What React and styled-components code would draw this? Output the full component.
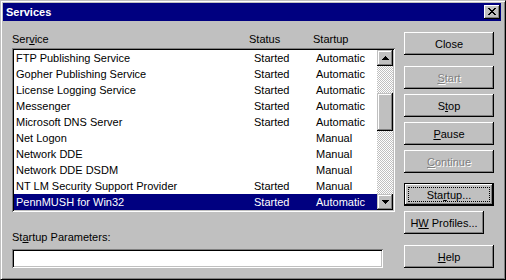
import styled, { createGlobalStyle } from "styled-components";

const GlobalStyle = createGlobalStyle`
  html, body {
    margin: 0;
    padding: 0;
    background: #c0c0c0;
  }
  body {
    font-family: "Liberation Sans", Arial, sans-serif;
    font-size: 11px;
    color: #000;
  }
  * {
    box-sizing: border-box;
  }
`;

const raised = "inset -1px -1px #000, inset 1px 1px #fff, inset -2px -2px #808080";
const raisedDefault =
  "inset 0 0 0 1px #000, inset -2px -2px #000, inset 2px 2px #fff, inset -3px -3px #808080";
const scrollRaised =
  "inset -1px -1px #000, inset 1px 1px #c0c0c0, inset -2px -2px #808080, inset 2px 2px #fff";
const sunken =
  "inset 1px 1px #808080, inset -1px -1px #fff, inset 2px 2px #000, inset -2px -2px #c0c0c0";

const Window = styled.div`
  width: 506px;
  height: 280px;
  background: #c0c0c0;
  border: 1px solid;
  border-color: #c0c0c0 #000 #000 #c0c0c0;
  box-shadow: inset 1px 1px #fff, inset -1px -1px #808080;
  padding: 2px 4px 2px 2px;
  display: flex;
  flex-direction: column;
`;

const TitleBar = styled.div`
  height: 18px;
  flex: none;
  background: #000080;
  color: #fff;
  font-weight: bold;
  display: flex;
  align-items: center;
  justify-content: space-between;
  padding: 0 1px 0 3px;
`;

const CaptionButton = styled.div`
  width: 16px;
  height: 14px;
  background: #c0c0c0;
  box-shadow: ${raised};
  display: flex;
  padding: 3px 0 0 4px;
`;

const Content = styled.div`
  display: flex;
  gap: 9px;
  padding: 10px 0 0 9px;
`;

const LeftColumn = styled.div`
  width: 383px;
  display: flex;
  flex-direction: column;
`;

const Header = styled.div`
  display: grid;
  grid-template-columns: 237px 64px 1fr;
  height: 17px;
  line-height: 17px;
`;

const ListBox = styled.div`
  height: 164px;
  background: #fff;
  box-shadow: ${sunken};
  padding: 2px;
  display: flex;
`;

const Rows = styled.div`
  flex: 1;
  display: flex;
  flex-direction: column;
`;

const Row = styled.div`
  display: grid;
  grid-template-columns: 238px 62px 1fr;
  height: 16px;
  line-height: 17px;
  padding-left: 2px;
  white-space: nowrap;
  background: ${(p) => (p.$selected ? "#000080" : "transparent")};
  color: ${(p) => (p.$selected ? "#fff" : "#000")};
`;

const ScrollBar = styled.div`
  width: 16px;
  display: flex;
  flex-direction: column;
`;

const ScrollButton = styled.div`
  width: 16px;
  height: 16px;
  flex: none;
  background: #c0c0c0;
  box-shadow: ${scrollRaised};
  display: flex;
  align-items: center;
  justify-content: center;
`;

const Track = styled.div`
  flex: 1;
  background-color: #fff;
  background-image: repeating-conic-gradient(#c0c0c0 0 25%, #fff 0 50%);
  background-size: 2px 2px;
`;

const Thumb = styled.div`
  height: ${(p) => p.$size}px;
  margin-top: ${(p) => p.$offset}px;
  background: #c0c0c0;
  box-shadow: ${scrollRaised};
`;

const Label = styled.div`
  margin-top: 17px;
  height: 16px;
  line-height: 16px;
`;

const TextInput = styled.input`
  margin-top: 4px;
  width: 371px;
  height: 19px;
  border: none;
  outline: none;
  background: #fff;
  box-shadow: ${sunken};
  padding: 2px 4px;
  font: 11px "Liberation Sans", Arial, sans-serif;
`;

const RightColumn = styled.div`
  width: 90px;
  display: flex;
  flex-direction: column;
  align-items: flex-start;
`;

const Button = styled.button`
  position: relative;
  width: ${(p) => p.$width || 90}px;
  height: 23px;
  margin-top: ${(p) => p.$gap}px;
  padding: 0;
  border: none;
  outline: none;
  background: #c0c0c0;
  font: normal 11px "Liberation Sans", Arial, sans-serif;
  color: ${(p) => (p.disabled ? "#808080" : "#000")};
  text-shadow: ${(p) => (p.disabled ? "1px 1px 0 #fff" : "none")};
  box-shadow: ${(p) => (p.$default ? raisedDefault : raised)};

  ${(p) =>
    p.$default &&
    `
    &::after {
      content: "";
      position: absolute;
      inset: 4px;
      border: 1px dotted #000;
    }
  `}
`;

const Key = styled.span`
  text-decoration: underline;
`;

const CloseGlyph = () => (
  <svg width="8" height="7" viewBox="0 0 8 7" shapeRendering="crispEdges">
    <path
      fill="#000"
      d="M0 0h2v1H0zM6 0h2v1H6zM1 1h2v1H1zM5 1h2v1H5zM2 2h4v1H2zM3 3h2v1H3zM2 4h4v1H2zM1 5h2v1H1zM5 5h2v1H5zM0 6h2v1H0zM6 6h2v1H6z"
    />
  </svg>
);

const Arrow = ({ down }) => (
  <svg
    width="7"
    height="4"
    viewBox="0 0 7 4"
    shapeRendering="crispEdges"
    style={down ? { transform: "rotate(180deg)" } : undefined}
  >
    <path fill="#000" d="M3 0h1v1H3zM2 1h3v1H2zM1 2h5v1H1zM0 3h7v1H0z" />
  </svg>
);

const services = [
  ["FTP Publishing Service", "Started", "Automatic"],
  ["Gopher Publishing Service", "Started", "Automatic"],
  ["License Logging Service", "Started", "Automatic"],
  ["Messenger", "Started", "Automatic"],
  ["Microsoft DNS Server", "Started", "Automatic"],
  ["Net Logon", "", "Manual"],
  ["Network DDE", "", "Manual"],
  ["Network DDE DSDM", "", "Manual"],
  ["NT LM Security Support Provider", "Started", "Manual"],
  ["PennMUSH for Win32", "Started", "Automatic"],
];

export default function App() {
  const selected = 9;
  return (
    <>
      <GlobalStyle />
      <Window>
        <TitleBar>
          <span>Services</span>
          <CaptionButton>
            <CloseGlyph />
          </CaptionButton>
        </TitleBar>
        <Content>
          <LeftColumn>
            <Header>
              <span>
                Ser<Key>v</Key>ice
              </span>
              <span>Status</span>
              <span>Startup</span>
            </Header>
            <ListBox>
              <Rows>
                {services.map(([name, status, startup], i) => (
                  <Row key={name} $selected={i === selected}>
                    <span>{name}</span>
                    <span>{status}</span>
                    <span>{startup}</span>
                  </Row>
                ))}
              </Rows>
              <ScrollBar>
                <ScrollButton>
                  <Arrow />
                </ScrollButton>
                <Track>
                  <Thumb $offset={27} $size={38} />
                </Track>
                <ScrollButton>
                  <Arrow down />
                </ScrollButton>
              </ScrollBar>
            </ListBox>
            <Label>
              St<Key>a</Key>rtup Parameters:
            </Label>
            <TextInput type="text" defaultValue="" />
          </LeftColumn>
          <RightColumn>
            <Button $gap={1}>Close</Button>
            <Button $gap={11} disabled>
              <Key>S</Key>tart
            </Button>
            <Button $gap={5}>
              S<Key>t</Key>op
            </Button>
            <Button $gap={5}>
              <Key>P</Key>ause
            </Button>
            <Button $gap={5} disabled>
              <Key>C</Key>ontinue
            </Button>
            <Button $gap={10} $default>
              Sta<Key>r</Key>tup...
            </Button>
            <Button $gap={5} $width={80}>
              H<Key>W</Key> Profiles...
            </Button>
            <Button $gap={11}>
              <Key>H</Key>elp
            </Button>
          </RightColumn>
        </Content>
      </Window>
    </>
  );
}
